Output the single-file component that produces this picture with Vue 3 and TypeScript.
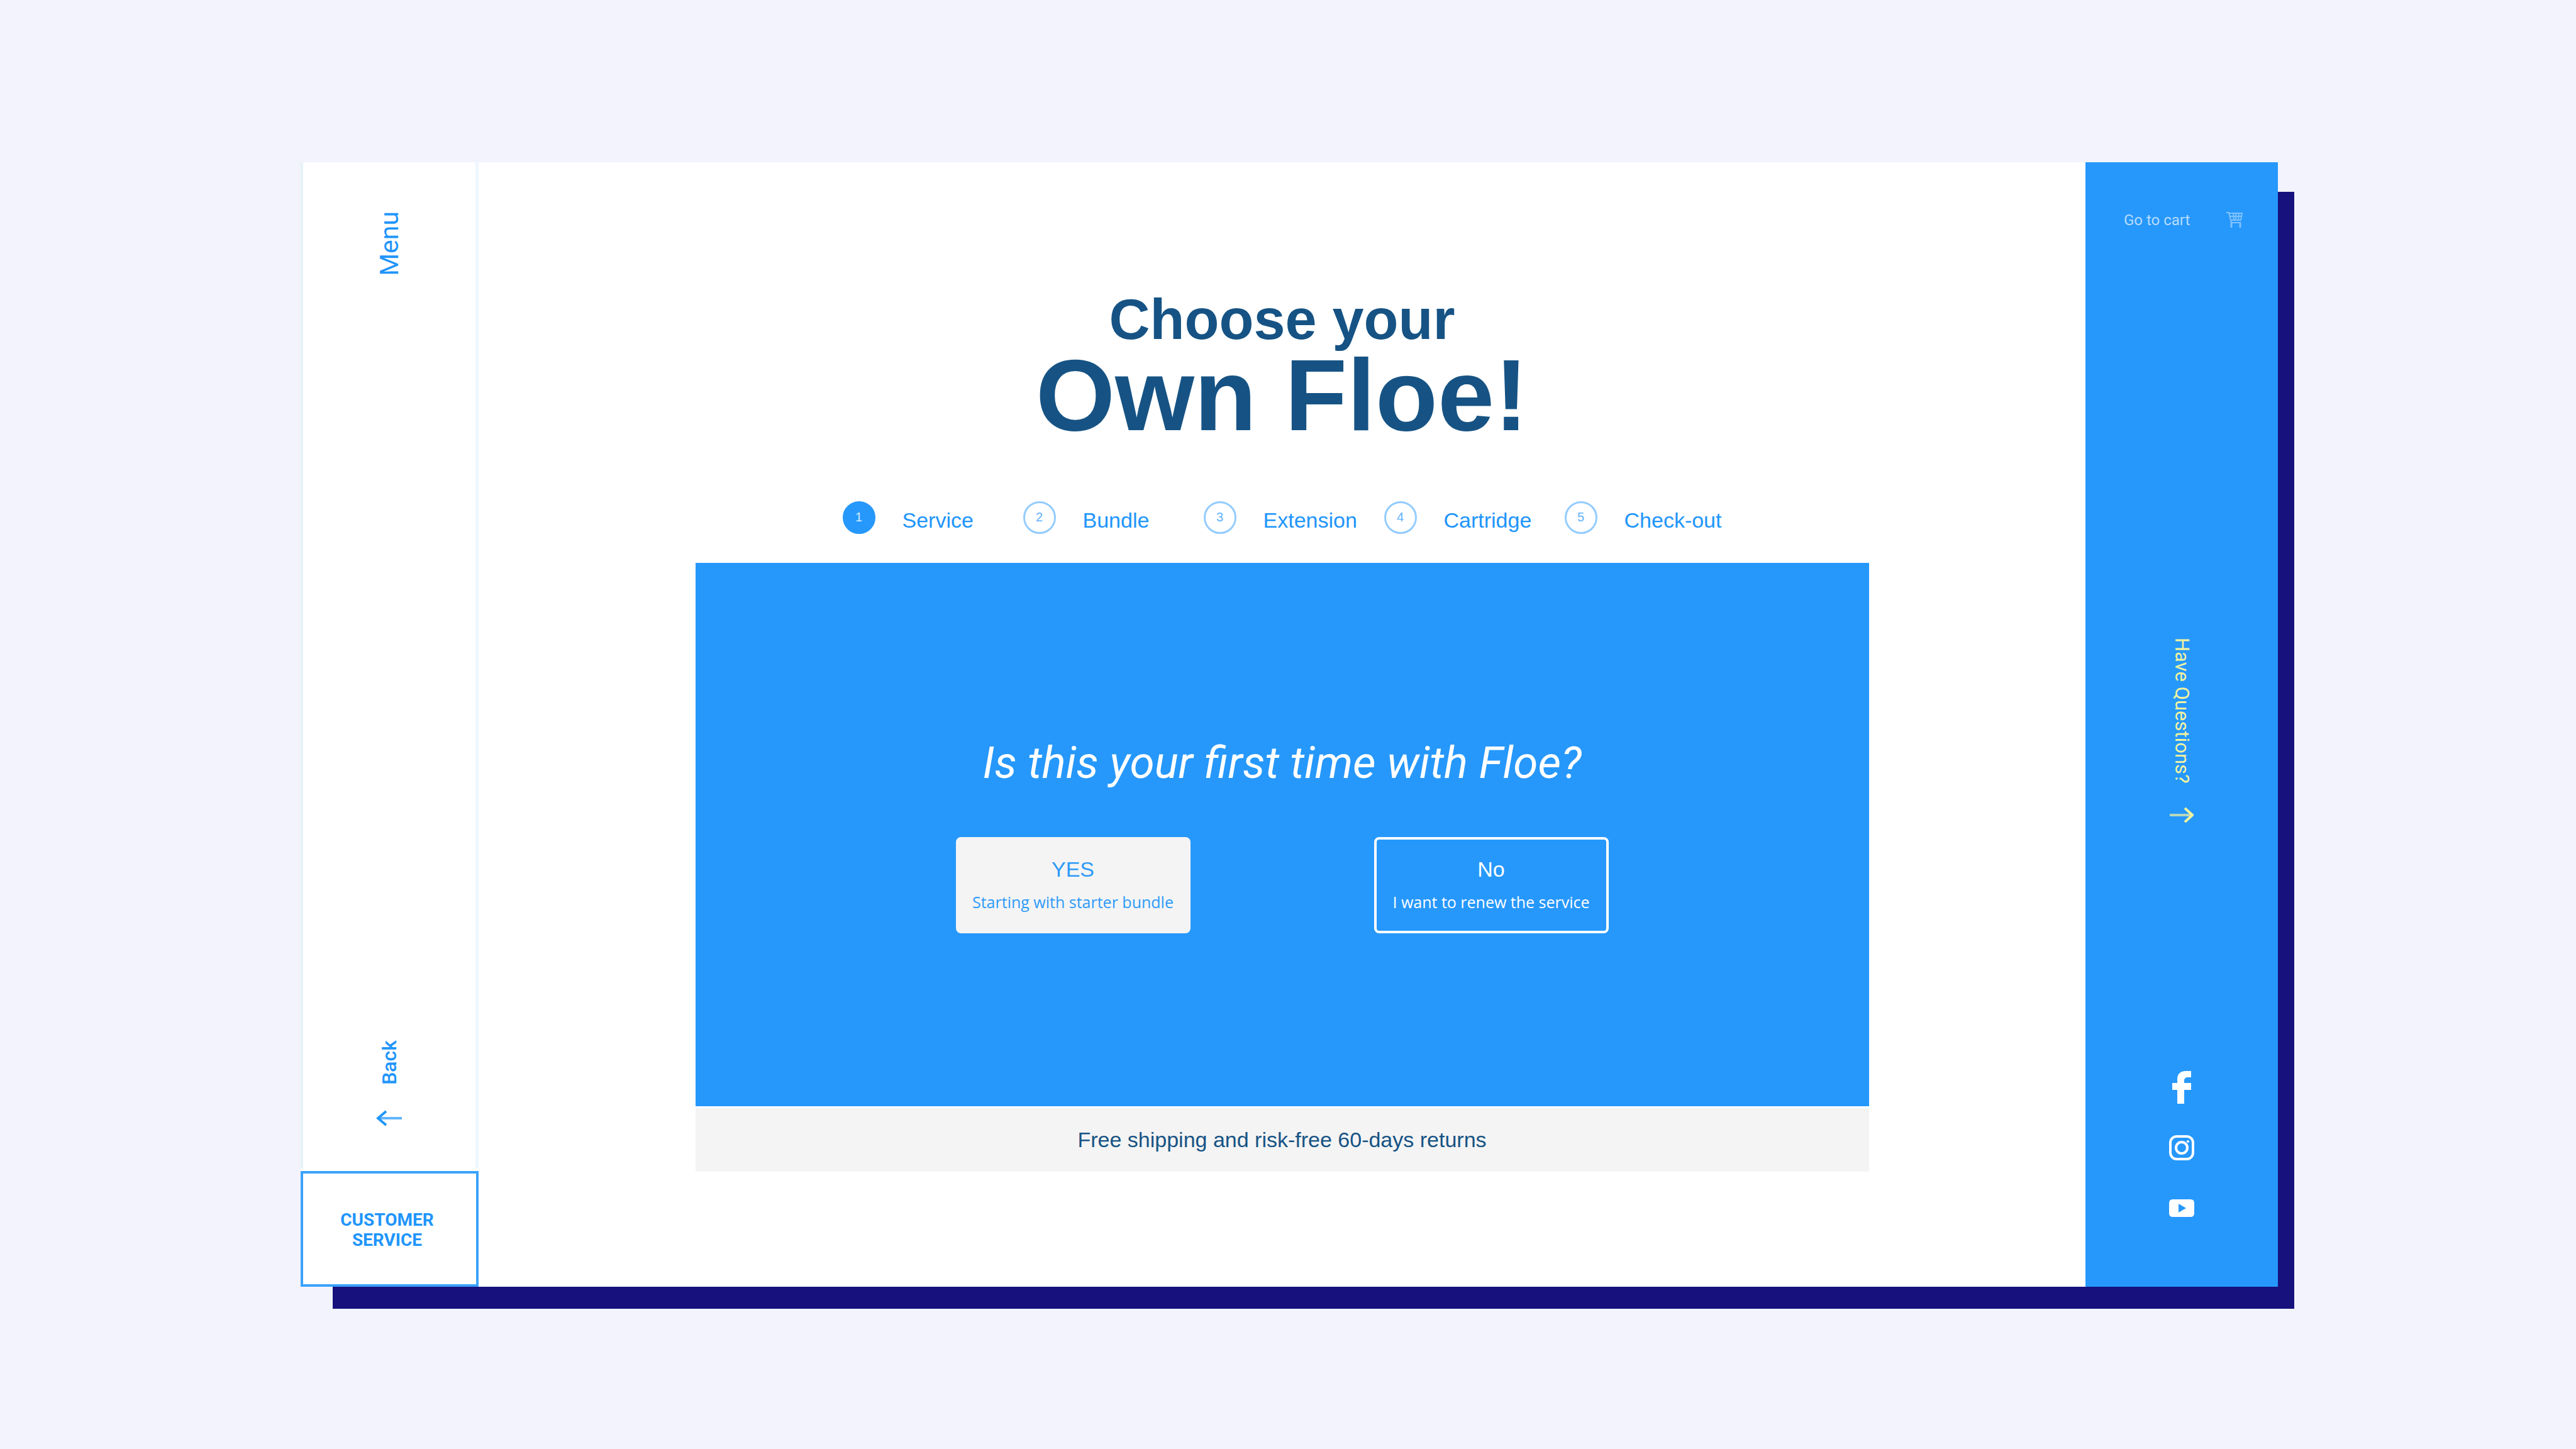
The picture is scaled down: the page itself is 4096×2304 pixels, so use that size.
<script setup lang="ts">
import { ref } from 'vue'

const steps: string[] = ['Service', 'Bundle', 'Extension', 'Cartridge', 'Check-out']
const current = ref(0)
</script>

<template>
  <div class="page">
    <div class="card">
      <aside class="left">
        <nav class="left-nav">
          <button class="vertical menu" type="button">Menu</button>
          <a class="back" href="#back">
            <span class="vertical back-label">Back</span>
            <svg class="arrow" viewBox="0 0 42 26" aria-hidden="true">
              <path d="M41 13H2" stroke-opacity=".7" />
              <path d="M16 2 3 13l13 11" />
            </svg>
          </a>
        </nav>
        <button class="service" type="button">CUSTOMER<br />SERVICE</button>
      </aside>

      <main class="main">
        <h1 class="title">
          <span class="title-small">Choose your</span>
          <span class="title-big">Own Floe!</span>
        </h1>

        <ol class="steps">
          <li v-for="(step, i) in steps" :key="step" class="step">
            <span class="dot" :class="{ active: i === current }">{{ i + 1 }}</span>
            <span class="step-label">{{ step }}</span>
          </li>
        </ol>

        <section class="banner">
          <div class="question">
            <h2>Is this your first time with Floe?</h2>
            <div class="choices">
              <button class="choice yes" type="button">
                <span class="choice-title">YES</span>
                <span class="choice-note">Starting with starter bundle</span>
              </button>
              <button class="choice no" type="button">
                <span class="choice-title">No</span>
                <span class="choice-note">I want to renew the service</span>
              </button>
            </div>
          </div>
          <p class="shipping">Free shipping and risk-free 60-days returns</p>
        </section>
      </main>

      <aside class="right">
        <a class="cart" href="#cart">
          <span>Go to cart</span>
          <svg class="cart-icon" viewBox="0 0 26 28" aria-hidden="true">
            <path d="M0 2h4l4 16h15" />
            <path d="M5 3h20l-2 11H7M11 3l1 11M15 3v11M20 3l-1 11M6 8h18" />
            <path d="M8 18v8M22 18v8" stroke-width="3" />
          </svg>
        </a>

        <a class="help" href="#questions">
          <span class="help-label">Have Questions?</span>
          <svg class="help-arrow" viewBox="0 0 38 26" aria-hidden="true">
            <path d="M0 13h36" stroke-opacity=".7" />
            <path d="M24 2l12 11-12 11" />
          </svg>
        </a>

        <div class="social">
          <a href="#facebook" aria-label="Facebook">
            <svg class="facebook" viewBox="0 0 30 52">
              <path d="M8 52V30H0V19h8v-6C8 5 13 0 21 0h9v10h-5c-4 0-6 2-6 5v4h11v11H19v22z" />
            </svg>
          </a>
          <a href="#instagram" aria-label="Instagram">
            <svg class="instagram" viewBox="0 0 40 40">
              <rect x="2" y="2" width="36" height="36" rx="10" />
              <circle cx="20" cy="20" r="9" />
              <circle class="lens" cx="30" cy="10" r="2" />
            </svg>
          </a>
          <a href="#youtube" aria-label="YouTube">
            <svg class="youtube" viewBox="0 0 40 28">
              <path fill-rule="evenodd" d="M6 0h28q6 0 6 6v16q0 6-6 6H6q-6 0-6-6V6q0-6 6-6zM15 7v14l12-7z" />
            </svg>
          </a>
        </div>
      </aside>
    </div>
  </div>
</template>

<style>
body {
  margin: 0;
  background: #f2f3fc;
}
</style>

<style scoped>
.page {
  display: grid;
  box-sizing: border-box;
  min-height: 100vh;
  padding: 258px 474px 258px 478px;
  background: #f2f3fc;
  font-family: Roboto, sans-serif;
  color: #2095fb;
  isolation: isolate;
}
a {
  color: inherit;
  text-decoration: none;
}
button {
  padding: 0;
  border: 0;
  background: none;
  color: inherit;
  font-family: inherit;
  cursor: pointer;
}
svg {
  display: block;
}
.card {
  position: relative;
  display: flex;
  background: #fff;
}
.card::before {
  content: '';
  position: absolute;
  z-index: -1;
  inset: 47px -26px -35px 51px;
  background: #17117d;
}

/* left rail */
.left {
  display: flex;
  flex: 0 0 283px;
  flex-direction: column;
  gap: 4px;
  background: #fff;
}
.left-nav {
  display: flex;
  flex: 1;
  flex-direction: column;
  align-items: center;
  justify-content: space-between;
  padding: 78px 0 67px;
  border-right: 5px solid #edf7ff;
  border-left: 4px solid #e6f2fa;
}
.vertical {
  writing-mode: vertical-rl;
  transform: rotate(180deg);
}
.menu {
  font-size: 41px;
  line-height: 48px;
}
.back {
  display: flex;
  flex-direction: column;
  align-items: center;
  gap: 40px;
}
.back-label {
  font-size: 32px;
  font-weight: 500;
  line-height: 40px;
}
.arrow {
  width: 42px;
  height: 26px;
}
.arrow path,
.help-arrow path {
  fill: none;
  stroke: currentColor;
  stroke-width: 4;
}
.service {
  height: 184px;
  padding: 4px 8px 0 0;
  border: 4px solid #3ba2fc;
  font-size: 28px;
  font-weight: 700;
  line-height: 32px;
}

/* centre */
.main {
  display: flex;
  flex: 1;
  flex-direction: column;
  align-items: center;
  padding: 193px 40px 181px;
  background: #fff;
}
.title {
  display: flex;
  flex-direction: column;
  align-items: center;
  margin: 0 0 106px;
  color: #165384;
  font-family: 'Liberation Sans', sans-serif;
  font-weight: 700;
}
.title-small {
  font-size: 90px;
  line-height: 114px;
}
.title-big {
  font-size: 162px;
  line-height: 126px;
}
.steps {
  display: grid;
  grid-template-columns: repeat(4, 287px) auto;
  margin: 0 0 38px;
  padding: 0;
  list-style: none;
  font-family: 'Liberation Sans', sans-serif;
}
.step {
  display: flex;
  gap: 43px;
}
.dot {
  box-sizing: border-box;
  width: 52px;
  height: 52px;
  border: 3px solid #93ccfe;
  border-radius: 50%;
  color: #5fb2fd;
  font-size: 20px;
  line-height: 44px;
  text-align: center;
}
.dot.active {
  border-color: #2698fb;
  background: #2698fb;
  color: #d4eafe;
}
.step-label {
  font-size: 34px;
  line-height: 60px;
}
.banner {
  display: flex;
  flex-direction: column;
  gap: 3px;
  width: 100%;
  max-width: 1866px;
}
.question {
  display: flex;
  flex-direction: column;
  align-items: center;
  justify-content: center;
  gap: 76px;
  min-height: 864px;
  background: #2698fb;
  color: #fff;
}
h2 {
  margin: 0;
  font-size: 71px;
  font-style: italic;
  font-weight: 400;
  line-height: 84px;
}
.choices {
  display: flex;
  gap: 292px;
}
.choice {
  display: flex;
  box-sizing: border-box;
  flex-direction: column;
  align-items: center;
  justify-content: center;
  gap: 14px;
  width: 373px;
  height: 153px;
  border: 4px solid #fff;
  border-radius: 8px;
}
.yes {
  border-color: #f4f4f4;
  background: #f4f4f4;
  color: #2e9bf8;
}
.choice-title {
  font-family: 'Liberation Sans', sans-serif;
  font-size: 34px;
  line-height: 40px;
}
.choice-note {
  font-family: 'Open Sans', sans-serif;
  font-size: 25px;
  line-height: 36px;
}
.shipping {
  margin: 0;
  background: #f4f4f4;
  color: #165384;
  font-family: 'Liberation Sans', sans-serif;
  font-size: 34px;
  line-height: 101px;
  text-align: center;
}

/* right rail */
.right {
  display: flex;
  box-sizing: border-box;
  flex: 0 0 306px;
  flex-direction: column;
  align-items: center;
  padding: 78px 0 99px;
  background: #2698fb;
}
.cart {
  display: flex;
  box-sizing: border-box;
  align-items: center;
  justify-content: space-between;
  width: 100%;
  padding: 0 56px 0 61px;
  color: #b5dafe;
  font-size: 24px;
  line-height: 28px;
}
.cart-icon {
  width: 26px;
  height: 28px;
  fill: none;
  stroke: #7fc2fd;
  stroke-width: 2;
}
.help {
  display: flex;
  flex-direction: column;
  align-items: center;
  gap: 37px;
  margin-top: 650px;
  color: #f3f3a0;
}
.help-label {
  writing-mode: vertical-rl;
  font-size: 31px;
  line-height: 40px;
}
.help-arrow {
  width: 38px;
  height: 26px;
}
.social {
  display: flex;
  flex-direction: column;
  gap: 44px;
  margin-top: auto;
  fill: #fff;
}
.social a {
  display: flex;
  align-items: center;
  justify-content: center;
  height: 52px;
}
.facebook {
  width: 30px;
  height: 52px;
}
.instagram {
  width: 40px;
  height: 40px;
  fill: none;
  stroke: #fff;
  stroke-width: 4;
}
.instagram .lens {
  fill: #fff;
  stroke: none;
}
.youtube {
  width: 40px;
  height: 28px;
}
</style>
